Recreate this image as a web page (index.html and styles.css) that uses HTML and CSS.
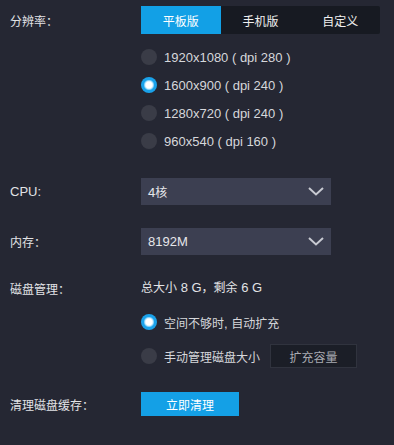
FILE: index.html
```html
<!DOCTYPE html>
<html lang="zh-CN">

<head>
  <meta charset="UTF-8">
  <meta name="viewport" content="width=device-width, initial-scale=1">
  <title>设置</title>
  <link rel="stylesheet" href="styles.css">
</head>

<body>
  <div id="settings">
    <div class="row resolution">
      <div class="label">分辨率：</div>
      <div class="content">
        <div class="segment">
          <span class="active">平板版</span>
          <span>手机版</span>
          <span>自定义</span>
        </div>
        <div class="radio-list">
          <div class="radio en"><i></i>1920x1080 ( dpi 280 )</div>
          <div class="radio en checked"><i></i>1600x900 ( dpi 240 )</div>
          <div class="radio en"><i></i>1280x720 ( dpi 240 )</div>
          <div class="radio en"><i></i>960x540 ( dpi 160 )</div>
        </div>
      </div>
    </div>

    <div class="row cpu">
      <div class="label en">CPU:</div>
      <div class="content">
        <div class="select">
          <span><span class="en">4</span>核</span>
          <svg width="16" height="9" viewBox="0 0 16 9"><polyline points="1,1 8,7.5 15,1" fill="none" stroke="#c8cad2" stroke-width="2"/></svg>
        </div>
      </div>
    </div>

    <div class="row memory">
      <div class="label">内存：</div>
      <div class="content">
        <div class="select">
          <span class="en">8192M</span>
          <svg width="16" height="9" viewBox="0 0 16 9"><polyline points="1,1 8,7.5 15,1" fill="none" stroke="#c8cad2" stroke-width="2"/></svg>
        </div>
      </div>
    </div>

    <div class="row disk">
      <div class="label">磁盘管理：</div>
      <div class="content">
        <div class="info">总大小<span class="en"> 8 G</span>，剩余<span class="en"> 6 G</span></div>
        <div class="radio-list">
          <div class="radio checked"><i></i><span>空间不够时<span class="en">,&nbsp;</span>自动扩充</span></div>
          <div class="radio"><i></i><span>手动管理磁盘大小</span><button class="ghost" type="button">扩充容量</button></div>
        </div>
      </div>
    </div>

    <div class="row clean">
      <div class="label">清理磁盘缓存：</div>
      <div class="content">
        <button class="primary" type="button">立即清理</button>
      </div>
    </div>
  </div>
</body>

</html>
```

FILE: styles.css
```css
html {
  margin: 0;
  padding: 0;
}

body {
  margin: 0;
  padding: 6px 0 0 10px;
  background: #252733;
  color: #e2e3e6;
  font-family: "Liberation Sans", "Noto Sans CJK SC", sans-serif;
  font-size: 12px;
}

/* latin text reads a little larger than the CJK glyphs */
.en {
  font-size: 13px;
}

.row {
  display: flex;
  flex-direction: row;
}

.label {
  width: 131px;
  flex-shrink: 0;
  display: flex;
  align-items: center;
}

.resolution .label { height: 28px; }
.cpu .label, .memory .label { height: 27px; }
.disk .label { height: 28px; }
.clean .label { height: 24px; }

.cpu { margin-top: 23px; }
.memory { margin-top: 23px; }
.disk { margin-top: 19px; }
.clean { margin-top: 22px; }

.segment {
  display: grid;
  grid-template-columns: repeat(3, 1fr);
  width: 239px;
  height: 28px;
  background: #171a22;
  border-radius: 2px;

  >span {
    display: flex;
    align-items: center;
    justify-content: center;
    color: #f0f0f0;
  }

  >.active {
    background: #12a0e6;
    color: #ffffff;
  }
}

.resolution .radio-list {
  margin-top: 9px;
}

.radio {
  display: flex;
  align-items: center;
  height: 28px;
  color: #d6d7db;

  >i {
    width: 16px;
    height: 16px;
    margin-right: 7px;
    border-radius: 50%;
    background: #3a3c47;
  }
}

.radio.checked>i {
  background: radial-gradient(circle, #ffffff 0 3px, #c6ebfd 4px, #1aa2ea 5.5px);
}

.select {
  display: flex;
  align-items: center;
  justify-content: space-between;
  box-sizing: border-box;
  width: 190px;
  height: 27px;
  padding: 0 7px 0 7px;
  background: #3c3f51;
  color: #e6e6ea;
}

.disk {
  .info {
    height: 28px;
    line-height: 28px;
  }

  .radio-list {
    display: flex;
    flex-direction: column;
    gap: 6px;
    margin-top: 6px;
  }
}

button {
  font-family: inherit;
  font-size: 12px;
  border-radius: 0;
  cursor: pointer;
}

.ghost {
  box-sizing: border-box;
  width: 87px;
  height: 24px;
  margin-left: 10px;
  padding: 0;
  background: #1b1e27;
  border: 1px solid #30333e;
  color: #a9abb2;
}

.primary {
  box-sizing: border-box;
  width: 98px;
  height: 24px;
  padding: 0;
  background: #14a0e6;
  border: none;
  color: #ffffff;
}
```
